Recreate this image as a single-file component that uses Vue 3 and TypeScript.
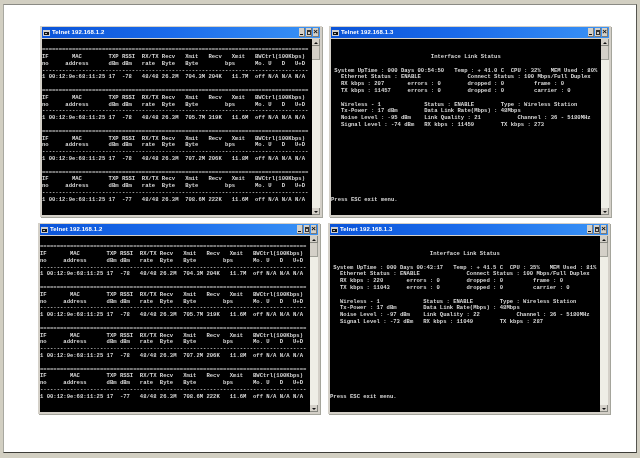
<script setup lang="ts">
interface TelnetWindow {
  ip: string
  kind: 'stats' | 'link'
  shift: string
  lines: string[]
}

const eq = '='.repeat(80)
const dash = '-'.repeat(80)

function statBlock(rssi: string, recv: string, xmit: string, rbps: string, xbps: string): string[] {
  return [
    eq,
    'IF       MAC        TXP RSSI  RX/TX Recv   Xmit   Recv   Xmit   BWCtrl(100Kbps)',
    'no     address      dBm dBm   rate  Byte   Byte        bps      Mo. U   D   U+D',
    dash,
    `1 00:12:9e:68:11:25 17  ${rssi}   48/48 ${recv}  ${xmit} ${rbps}   ${xbps}  off N/A N/A N/A`,
    '',
  ]
}

const stats: string[] = [
  '',
  ...statBlock('-78', '26.2M', '704.3M', '204K', '11.7M'),
  ...statBlock('-78', '26.3M', '705.7M', '319K', '11.6M'),
  ...statBlock('-78', '26.3M', '707.2M', '206K', '11.8M'),
  ...statBlock('-77', '26.3M', '708.6M', '222K', '11.6M'),
]

function linkStatus(
  time: string, temp: string, cpu: string, mem: string, rx: string, tx: string,
  noise: string, quality: string, signal: string, wrx: string, wtx: string,
): string[] {
  return [
    '',
    '',
    '                              Interface Link Status',
    '',
    ` System UpTime : 000 Days ${time}   Temp : + ${temp} C  CPU : ${cpu}%   MEM Used : ${mem}%`,
    '   Ethernet Status : ENABLE              Connect Status : 100 Mbps/Full Duplex',
    `   RX kbps : ${rx}       errors : 0        dropped : 0         frame : 0`,
    `   TX kbps : ${tx}     errors : 0        dropped : 0         carrier : 0`,
    '',
    '   Wireless - 1             Status : ENABLE        Type : Wireless Station',
    '   Tx-Power : 17 dBm        Data Link Rate(Mbps) : 48Mbps',
    `   Noise Level : ${noise} dBm    Link Quality : ${quality}           Channel : 36 - 5180MHz`,
    `   Signal Level : ${signal} dBm   RX kbps : ${wrx}        TX kbps : ${wtx}`,
    ...Array<string>(10).fill(''),
    'Press ESC exit menu.',
  ]
}

const windows: TelnetWindow[] = [
  { ip: '192.168.1.2', kind: 'stats', shift: '', lines: stats },
  {
    ip: '192.168.1.3', kind: 'link', shift: '',
    lines: linkStatus('00:54:50', '41.0', '32', '80', '207', '11457', '-95', '21', '-74', '11459', '273'),
  },
  { ip: '192.168.1.2', kind: 'stats', shift: 'left', lines: stats },
  {
    ip: '192.168.1.3', kind: 'link', shift: 'nudge',
    lines: linkStatus('00:43:17', '41.5', '35', '81', '220', '11043', '-97', '22', '-73', '11049', '287'),
  },
]
</script>

<template>
  <div class="page">
    <div class="sheet">
      <section v-for="(w, i) in windows" :key="i" class="win" :class="w.shift">
        <header class="title">
          <span class="icon">
            <svg width="7" height="6" viewBox="0 0 7 6">
              <rect width="7" height="6" fill="#cfcfcf" />
              <rect x="1" y="2" width="5" height="3" fill="#111" />
              <rect x="2" y="3" width="2" height="1" fill="#bbb" />
            </svg>
          </span>
          <span class="caption">Telnet {{ w.ip }}</span>
          <span class="btns">
            <span class="btn"><i class="min"></i></span>
            <span class="btn"><i class="max"></i></span>
            <span class="btn"><i class="cls">×</i></span>
          </span>
        </header>
        <div class="client">
          <pre class="term">{{ w.lines.join('\n') }}</pre>
          <div class="scroll">
            <span class="arrow"><i class="up"></i></span>
            <span class="thumb"></span>
            <span class="track"></span>
            <span class="arrow"><i class="down"></i></span>
          </div>
        </div>
      </section>
    </div>
  </div>
</template>

<style>
html, body { margin: 0; background: #d2cfc2; }
</style>

<style scoped>
.page {
  width: 640px;
  height: 458px;
  box-sizing: border-box;
  padding: 4px 3px 5px 3px;
  background: #d2cfc2;
  overflow: hidden;
  font-family: "Liberation Sans", sans-serif;
}
.sheet {
  height: 100%;
  box-sizing: border-box;
  background: #fff;
  border-top: 1px solid #8a8a84;
  border-right: 1px solid #55554f;
  border-bottom: 1px solid #3c3c38;
  border-left: 1px solid #a8a8a0;
  padding: 21px 0 0 36px;
  display: grid;
  grid-template-columns: 283px 283px;
  grid-template-rows: 191px 191px;
  column-gap: 6px;
  row-gap: 6px;
  align-content: start;
}
.win {
  display: flex;
  flex-direction: column;
  box-sizing: border-box;
  width: 282px;
  height: 191px;
  padding: 1px 2px 2px 2px;
  background: #d4d0c8;
  box-shadow: 1px 1px 0 #a5a59c;
  filter: blur(0.45px);
}
.win.left { margin-left: -2px; }
.win.nudge { margin-left: -1px; }
.title {
  display: flex;
  align-items: center;
  flex: none;
  height: 11px;
  padding: 0 1px 0 1px;
  background: linear-gradient(90deg, #0b54d8 0%, #1a6aea 45%, #3a93f6 100%);
  color: #fff;
}
.icon { display: flex; margin-right: 2px; }
.caption {
  font-size: 6px;
  font-weight: 700;
  line-height: 11px;
  letter-spacing: 0.1px;
}
.btns { margin-left: auto; display: flex; gap: 1px; }
.btn {
  position: relative;
  display: flex;
  align-items: center;
  justify-content: center;
  width: 5px;
  height: 8px;
  background: #d4d0c8;
  border: 0 solid #7a7a7a;
  border-right-width: 1px;
  border-bottom-width: 1px;
}
.min { display: block; width: 3px; height: 1px; margin-top: 4px; background: #111; }
.max { display: block; width: 4px; height: 5px; border: 1px solid #333; border-top-width: 2px; box-sizing: border-box; }
.cls { font: 700 8px/8px "Liberation Sans", sans-serif; color: #111; }
.client {
  flex: 1;
  min-height: 0;
  display: flex;
  margin-top: 1px;
}
.term {
  flex: 1;
  min-width: 0;
  margin: 0;
  padding: 1.4px 0 0 0;
  overflow: hidden;
  background: #000;
  color: #d8d8d8;
  font-family: "Liberation Mono", monospace;
  font-size: 5.55px;
  font-weight: 700;
  line-height: 6.8px;
  white-space: pre;
}
.scroll {
  flex: none;
  width: 8px;
  display: flex;
  flex-direction: column;
  background: #efeee6;
}
.arrow {
  flex: none;
  height: 7px;
  display: flex;
  align-items: center;
  justify-content: center;
  background: #d4d0c8;
  box-shadow: inset -1px -1px 0 #85857e;
}
.up, .down { display: block; width: 0; height: 0; border-left: 2px solid transparent; border-right: 2px solid transparent; }
.up { border-bottom: 2px solid #111; }
.down { border-top: 2px solid #111; }
.thumb {
  flex: none;
  height: 14px;
  background: #d4d0c8;
  box-shadow: inset -1px -1px 0 #a0a098;
}
.track { flex: 1; }
</style>
